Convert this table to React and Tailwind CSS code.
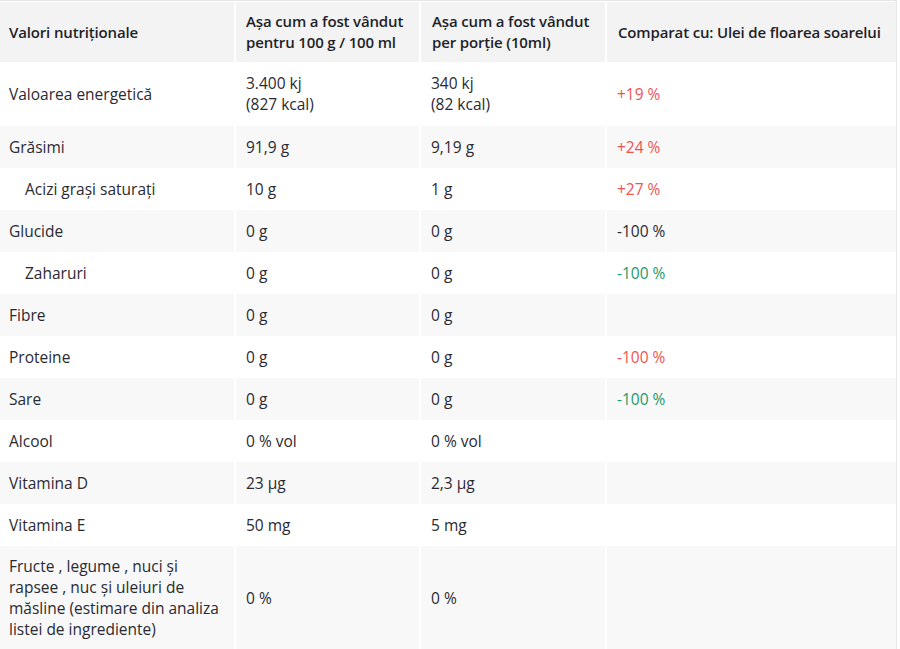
import React from "react";

const rows = [
  { h: "h-[64px]", bg: "bg-white", a: "Valoarea energetică", b: ["3.400 kj", "(827 kcal)"], c: ["340 kj", "(82 kcal)"], d: "+19 %", dc: "text-[#ef5350]" },
  { h: "h-[42px]", bg: "bg-[#f8f8f8]", a: "Grăsimi", b: ["91,9 g"], c: ["9,19 g"], d: "+24 %", dc: "text-[#ef5350]" },
  { h: "h-[42px]", bg: "bg-white", a: "Acizi grași saturați", sub: true, b: ["10 g"], c: ["1 g"], d: "+27 %", dc: "text-[#ef5350]" },
  { h: "h-[42px]", bg: "bg-[#f8f8f8]", a: "Glucide", b: ["0 g"], c: ["0 g"], d: "-100 %", dc: "text-[#2a2a33]" },
  { h: "h-[42px]", bg: "bg-white", a: "Zaharuri", sub: true, b: ["0 g"], c: ["0 g"], d: "-100 %", dc: "text-[#239a6c]" },
  { h: "h-[42px]", bg: "bg-[#f8f8f8]", a: "Fibre", b: ["0 g"], c: ["0 g"], d: "", dc: "" },
  { h: "h-[42px]", bg: "bg-white", a: "Proteine", b: ["0 g"], c: ["0 g"], d: "-100 %", dc: "text-[#ef5350]" },
  { h: "h-[42px]", bg: "bg-[#f8f8f8]", a: "Sare", b: ["0 g"], c: ["0 g"], d: "-100 %", dc: "text-[#239a6c]" },
  { h: "h-[42px]", bg: "bg-white", a: "Alcool", b: ["0 % vol"], c: ["0 % vol"], d: "", dc: "" },
  { h: "h-[42px]", bg: "bg-[#f8f8f8]", a: "Vitamina D", b: ["23 µg"], c: ["2,3 µg"], d: "", dc: "" },
  { h: "h-[42px]", bg: "bg-white", a: "Vitamina E", b: ["50 mg"], c: ["5 mg"], d: "", dc: "" },
];

function Cell({ children, className = "" }) {
  return <div className={"flex flex-col justify-center " + className}>{children}</div>;
}

export default function App() {
  return (
    <div className="w-[900px] h-[649px] overflow-hidden bg-white text-[#2a2a33] text-[15.5px] leading-[21px]" style={{ fontFamily: "'Open Sans', 'Noto Sans', sans-serif" }}>
      <div className="w-[897px] h-full border-t border-t-[#e6e6e6] border-r-2 border-r-[#e8e8e8] pt-px pr-[2px]">
        <div className="flex flex-col">
          <div className="grid grid-cols-[234px_183px_184px_289px] gap-x-[2px] h-[60px] font-semibold text-[#1f1f29] text-[15px] tracking-[-0.15px] whitespace-nowrap">
            <Cell className="bg-[#f3f3f3] pl-[9px]">Valori nutriționale</Cell>
            <Cell className="bg-[#f3f3f3] pl-[10px]"><span>Așa cum a fost vândut</span><span>pentru 100 g / 100 ml</span></Cell>
            <Cell className="bg-[#f3f3f3] pl-[11px]"><span>Așa cum a fost vândut</span><span>per porție (10ml)</span></Cell>
            <Cell className="bg-[#f3f3f3] pl-[11px]">Comparat cu: Ulei de floarea soarelui</Cell>
          </div>
          {rows.map((r, i) => (
            <div key={i} className={"grid grid-cols-[234px_183px_184px_289px] gap-x-[2px] " + r.h}>
              <Cell className={r.bg + (r.sub ? " pl-[25px]" : " pl-[9px]")}>{r.a}</Cell>
              <Cell className={r.bg + " pl-[10px]"}>{r.b.map((t, j) => <span key={j}>{t}</span>)}</Cell>
              <Cell className={r.bg + " pl-[10px]"}>{r.c.map((t, j) => <span key={j}>{t}</span>)}</Cell>
              <Cell className={r.bg + " pl-[10px] " + r.dc}>{r.d}</Cell>
            </div>
          ))}
          <div className="grid grid-cols-[234px_183px_184px_289px] gap-x-[2px] h-[104px]">
            <Cell className="bg-[#f8f8f8] pl-[9px] pr-[8px]">Fructe , legume , nuci și rapsee , nuc și uleiuri de măsline (estimare din analiza listei de ingrediente)</Cell>
            <Cell className="bg-[#f8f8f8] pl-[10px]">0 %</Cell>
            <Cell className="bg-[#f8f8f8] pl-[10px]">0 %</Cell>
            <Cell className="bg-[#f8f8f8]"></Cell>
          </div>
        </div>
      </div>
    </div>
  );
}
